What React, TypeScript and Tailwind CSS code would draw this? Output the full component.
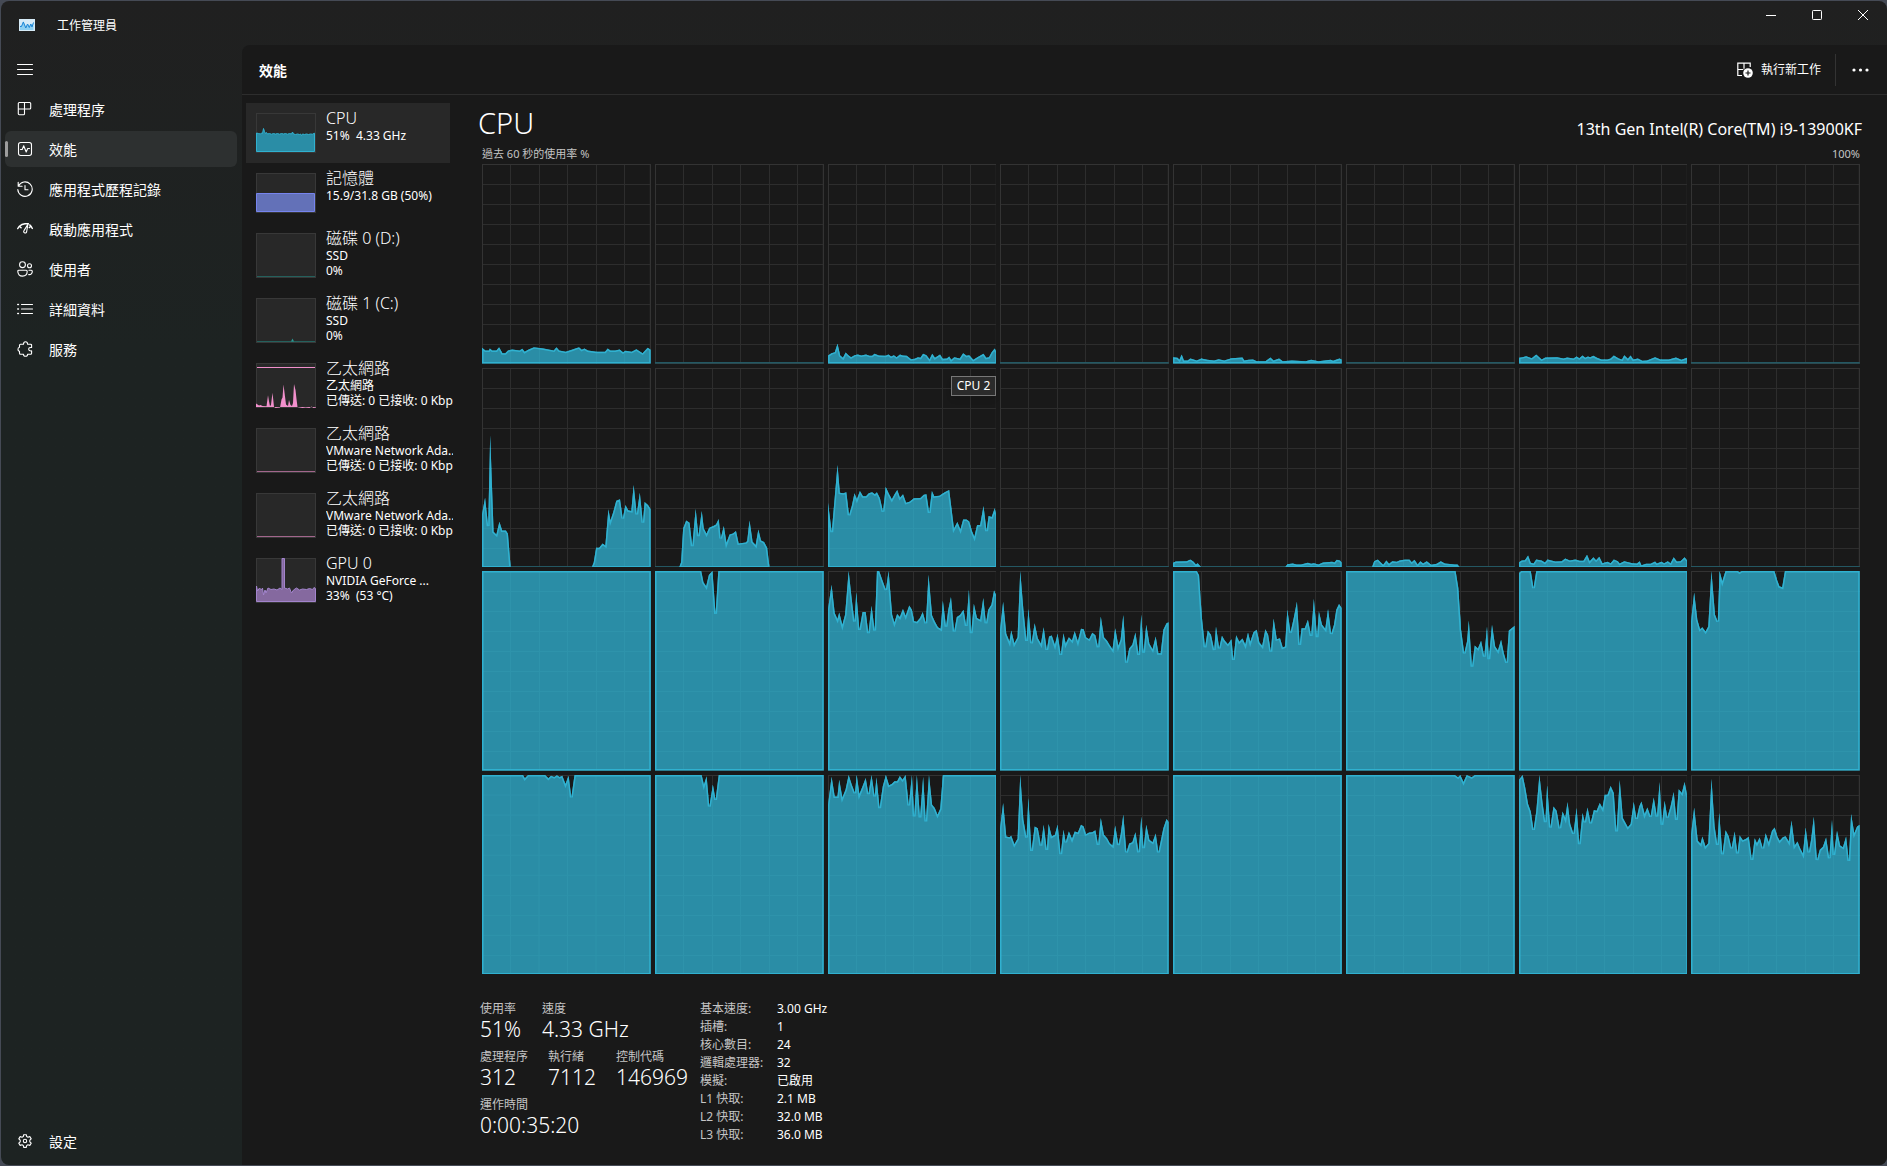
import type { ReactNode } from "react";

/* ---------- chart data: "x,y" pairs, `top` is the y value of 100 % ---------- */

type Series = { w: number; top: number; pts?: string; full?: boolean };

const CHART_H = 597;
const idle = (top: number): Series => ({ w: 372, top });
const busy = (top: number): Series => ({ w: 372, top, full: true });

const cores: Series[] = [
  {
    w: 494, top: -528,
    pts: "0,22 10,30 20,30 23,24 30,30 42,30 50,20 60,38 68,38 76,30 88,27 110,30 118,25 125,34 135,28 152,20 180,24 210,30 218,20 226,30 245,34 265,27 284,20 292,28 300,24 310,30 335,34 360,34 368,24 376,30 390,30 403,27 413,35 420,31 438,34 452,26 470,38 485,22 494,28",
  },
  idle(-528),
  {
    w: 497, top: -528,
    pts: "0,45 10,38 20,35 28,10 36,45 44,52 52,36 60,44 68,50 78,44 88,42 98,45 112,42 122,46 130,46 137,40 150,45 170,46 178,42 186,48 194,44 202,50 212,42 220,45 232,46 245,56 255,55 265,50 272,52 280,40 290,44 299,56 307,40 315,52 330,42 338,55 350,54 357,48 363,58 372,50 388,54 398,38 408,46 416,44 428,58 440,50 458,40 466,52 474,50 482,35 491,24 497,36",
  },
  idle(-528),
  {
    w: 369, top: -528,
    pts: "0,50 10,52 14,58 19,42 24,60 32,60 38,54 52,60 62,54 75,58 90,60 100,56 112,60 128,53 152,51 156,60 165,58 175,57 183,62 202,62 213,51 220,60 232,54 240,62 260,60 290,62 302,58 318,62 345,58 350,61 364,54 369,57",
  },
  idle(-528),
  {
    w: 372, top: -528,
    pts: "0,52 8,50 16,47 28,53 38,42 50,57 58,51 84,50 98,54 106,51 120,54 127,48 133,53 140,45 146,52 152,48 157,50 164,46 172,52 182,57 195,57 202,54 209,45 220,54 227,57 232,44 240,55 246,45 252,57 262,54 272,61 282,60 300,50 312,57 330,57 346,51 358,58 372,51",
  },
  idle(-528),

  {
    w: 494, top: 82,
    pts: "0,520 9,470 18,555 24,283 34,572 42,580 51,542 59,568 70,568 76,578 84,679 321,679 327,664 334,620 343,620 353,607 361,613 370,505 376,538 384,514 393,479 404,475 412,532 420,492 428,508 437,510 444,432 453,520 462,455 471,545 476,483 486,492 494,505",
  },
  {
    w: 498, top: 82,
    pts: "0,679 71,679 77,663 83,562 92,538 102,545 110,615 120,503 128,585 138,510 144,562 152,578 160,560 172,555 180,550 188,534 194,592 203,555 211,605 220,580 230,577 239,570 247,607 268,604 272,600 279,538 288,602 297,612 305,565 313,598 322,603 331,620 338,679 498,679",
  },
  {
    w: 497, top: 82,
    pts: "0,485 11,573 28,372 35,455 45,457 54,454 62,522 70,495 78,457 85,475 94,450 103,466 112,466 120,457 130,454 138,460 144,454 153,472 162,512 170,438 180,460 188,475 196,460 204,447 212,470 221,460 230,485 240,482 253,472 272,471 282,461 290,460 298,515 306,450 313,466 328,464 345,453 357,447 371,562 381,543 390,565 398,535 408,535 416,541 424,570 431,587 439,552 448,552 458,495 467,570 473,525 482,528 491,502 497,525",
  },
  idle(82),
  {
    w: 369, top: 82,
    pts: "0,665 6,661 30,660 38,655 45,662 50,670 54,666 62,679 245,679 250,669 262,667 270,670 280,670 295,665 302,668 308,666 318,670 328,664 348,662 353,664 358,656 365,658 369,664",
  },
  {
    w: 372, top: 82,
    pts: "0,679 57,679 62,660 70,655 82,671 89,658 95,668 102,660 112,662 118,658 130,655 140,655 145,663 151,656 158,670 164,660 170,667 178,660 188,671 200,668 209,660 218,667 240,670 246,670 251,679 372,679",
  },
  {
    w: 372, top: 82,
    pts: "0,663 6,658 13,657 20,643 26,665 32,667 38,655 50,658 57,664 63,655 80,661 94,660 102,652 112,658 124,655 134,659 142,659 150,641 156,660 164,648 170,657 177,647 184,666 195,662 202,666 209,655 218,660 222,667 232,660 250,666 260,667 266,660 270,672 280,668 290,668 300,661 304,667 314,662 320,666 328,660 334,666 341,648 348,661 356,660 365,648 372,660",
  },
  idle(82),

  busy(34),
  { w: 376, top: 34, pts: "0,34 103,34 108,68 114,80 120,46 128,34 135,162 141,34 376,34" },
  {
    w: 376, top: 34,
    pts: "0,148 8,75 15,160 21,178 25,158 32,195 38,165 46,34 53,120 59,185 63,98 70,210 77,157 84,157 90,220 97,138 104,212 109,34 114,34 122,65 129,90 135,34 143,165 148,188 154,163 160,172 167,148 173,168 181,137 187,150 192,184 198,186 205,175 211,157 218,190 224,45 232,167 238,185 245,202 251,207 256,124 263,200 268,150 274,112 281,215 287,172 294,166 302,150 308,198 314,90 319,220 325,132 332,175 339,180 346,115 352,190 357,150 364,135 370,92 376,110",
  },
  {
    w: 375, top: 34,
    pts: "0,210 7,126 14,222 21,245 25,212 32,250 39,232 45,34 52,150 59,243 63,148 70,250 77,190 84,235 91,252 97,202 104,270 109,230 115,227 122,255 128,222 135,285 141,220 146,252 153,232 160,242 166,214 173,244 180,207 186,208 191,232 198,238 205,219 212,226 218,262 224,170 231,232 238,243 244,256 250,268 256,205 263,258 268,240 274,166 281,308 287,266 294,255 301,218 308,285 314,164 319,278 325,195 332,252 339,268 346,230 352,280 357,280 363,210 370,190 375,187",
  },
  {
    w: 369, top: 34,
    pts: "0,34 52,34 57,47 63,170 70,262 76,212 83,225 90,270 94,200 101,265 107,228 113,242 120,253 128,238 132,300 138,226 145,246 152,236 158,254 164,218 169,246 176,217 183,210 189,248 195,258 202,208 208,225 214,275 220,176 227,238 234,235 240,263 245,260 250,150 257,218 264,175 271,126 277,255 281,205 288,205 295,180 302,228 308,117 315,232 319,155 326,195 333,207 339,148 346,222 352,195 357,150 363,133 369,145",
  },
  {
    w: 371, top: 34,
    pts: "0,34 241,34 247,85 253,210 260,280 266,245 270,182 277,320 283,257 290,266 297,243 304,290 310,200 314,298 321,195 328,260 334,272 341,240 347,280 353,308 358,212 371,198",
  },
  { w: 372, top: 34, pts: "0,40 5,34 26,34 32,85 38,34 372,34" },
  {
    w: 372, top: 34,
    pts: "0,185 7,98 14,180 20,208 25,202 32,215 38,200 45,34 53,165 59,185 63,34 69,65 76,34 103,34 107,38 112,34 184,34 190,62 195,80 201,83 207,34 372,34",
  },

  {
    w: 374, top: 31,
    pts: "0,31 91,31 95,41 102,31 140,31 147,41 153,33 160,37 166,32 172,37 178,33 185,58 192,33 198,98 205,31 374,31",
  },
  { w: 376, top: 31, pts: "0,31 104,31 109,60 115,35 121,125 129,60 135,105 142,31 376,31" },
  {
    w: 376, top: 31,
    pts: "0,120 8,36 15,95 21,95 25,45 32,98 39,75 46,31 53,60 60,85 64,31 70,88 77,65 84,40 90,88 97,31 104,95 108,38 115,130 122,65 129,31 136,62 142,58 148,50 154,50 160,34 166,45 173,31 180,122 187,31 192,155 198,31 205,158 212,36 218,170 225,31 232,120 238,130 244,150 250,132 256,31 376,31",
  },
  {
    w: 375, top: 31,
    pts: "0,190 7,115 14,215 21,217 25,213 32,238 39,222 45,31 52,165 59,218 63,100 70,258 77,185 84,190 91,242 97,180 104,255 108,178 115,215 122,210 128,180 135,268 141,195 146,232 153,200 160,222 166,200 173,203 180,180 186,185 191,208 198,203 205,202 212,196 218,240 224,160 231,210 238,220 244,235 250,242 256,182 263,240 268,210 274,150 281,262 287,236 294,232 301,202 308,262 314,155 319,250 325,180 332,225 339,232 346,206 352,262 357,230 363,190 370,163 375,172",
  },
  busy(31),
  { w: 372, top: 31, pts: "0,31 240,31 247,38 252,31 259,52 266,31 277,38 284,31 372,31" },
  {
    w: 372, top: 31,
    pts: "0,45 8,31 14,70 20,118 26,140 32,195 38,140 45,31 52,115 58,172 62,62 69,188 76,125 83,138 90,190 96,140 102,160 107,112 113,178 120,206 127,130 133,238 140,145 145,172 151,128 158,175 165,136 171,138 178,115 184,130 189,90 195,90 202,64 209,85 215,200 222,46 229,160 235,175 240,187 246,178 253,112 259,162 265,125 270,110 277,148 283,128 290,155 297,98 304,155 310,52 315,180 321,108 327,158 334,125 341,82 347,165 352,74 359,85 365,52 372,100",
  },
  {
    w: 371, top: 31,
    pts: "0,210 7,128 15,228 21,237 25,215 32,245 38,235 45,42 52,185 58,240 62,145 69,268 76,196 83,215 89,250 96,200 102,265 107,212 114,226 121,222 127,216 134,285 140,220 145,235 151,218 158,250 164,205 171,232 178,198 184,188 190,215 195,228 202,217 208,214 215,230 221,167 228,242 234,230 240,250 246,266 252,188 259,262 264,225 270,156 277,285 283,255 290,246 297,218 304,280 310,165 314,270 321,198 328,242 334,247 341,215 347,288 352,148 359,205 365,185 371,180",
  },
];

function CoreChart({ series, index }: { series: Series; index: number }) {
  const { w, top } = series;
  const bottom = top + CHART_H;
  const pts = series.full ? `0,${top} ${w},${top}` : series.pts;
  const area = pts && `0,${bottom} ${pts} ${w},${bottom}`;
  const cols = [1, 2, 3, 4, 5].map((i) => (i * w) / 5.92);
  const rows = [1, 2, 3, 4, 5, 6, 7, 8, 9].map((i) => top + i * 60);
  const lines = (
    <>
      {cols.map((x) => (
        <line key={`c${x}`} x1={x} x2={x} y1={top} y2={bottom} vectorEffect="non-scaling-stroke" />
      ))}
      {rows.map((y) => (
        <line key={`r${y}`} x1={0} x2={w} y1={y} y2={y} vectorEffect="non-scaling-stroke" />
      ))}
    </>
  );
  return (
    <svg
      role="img"
      aria-label={`CPU ${index}`}
      viewBox={`0 ${top} ${w} ${CHART_H}`}
      preserveAspectRatio="none"
      className="block h-full w-full"
    >
      <g stroke="#2d2d2d" strokeWidth="1" shapeRendering="crispEdges">
        {lines}
      </g>
      <rect x="0" y={top} width={w} height={CHART_H} fill="none" stroke="#333333" strokeWidth="2" vectorEffect="non-scaling-stroke" />
      <rect x="0" y={bottom - 4} width={w} height="4" fill="#24626f" />
      {area && (
        <>
          <clipPath id={`core-${index}`}>
            <polygon points={area} />
          </clipPath>
          <polygon points={area} fill="#2a8da6" />
          <g clipPath={`url(#core-${index})`}>
            <g stroke="#2e93ab" strokeWidth="1" shapeRendering="crispEdges">
              {lines}
            </g>
            <polygon points={area} fill="none" stroke="#30b1d0" strokeWidth="3" vectorEffect="non-scaling-stroke" />
          </g>
        </>
      )}
    </svg>
  );
}

/* ---------- thumbnails ---------- */

function Thumb({ h, children }: { h: number; children: ReactNode }) {
  return (
    <svg width="60" height={h} viewBox={`0 0 60 ${h}`} className="shrink-0" aria-hidden="true">
      <rect x="0.5" y="0.5" width="59" height={h - 1} fill="#282828" stroke="#383838" />
      {children}
    </svg>
  );
}

const cpuThumb = (
  <Thumb h={40}>
    <path
      d="M.5 38.500V20l2 .5 2 .5 1-1 1 .5 1-5 1 3 1 2 1-1 1 1.500 2-.5 2 .7 2-.7 2 .6 2-.6 2 .7 2-.7 2 .5 2-.5 2 .7 2-.7 2 .5 1-2 1 2 2 .5 2-.5 2 .5 1-.5 1 1.500 1-1.500 2 .5 2-.5 2 .5 2-.5 2 .2 2-1V38.500z"
      fill="#2a8da6" stroke="#30b1d0"
    />
  </Thumb>
);
const memThumb = (
  <Thumb h={40}>
    <path d="M.5 38.500V20.500H58.500V38.500z" fill="#6371b8" stroke="#7684ee" />
  </Thumb>
);
const disk0Thumb = (
  <Thumb h={45}>
    <path d="M1 43.500H59" stroke="#24605c" />
  </Thumb>
);
const disk1Thumb = (
  <Thumb h={45}>
    <path d="M1 43.500H59" stroke="#24605c" />
    <path d="M35 43.500l1.500-3 1.500 3z" fill="#2a9a94" />
  </Thumb>
);
const ethThumb = (
  <Thumb h={45}>
    <path d="M1 4.500H59" stroke="#f290cc" />
    <path
      d="M0 44V40.500l1.500 1 1.500 1 1.500-.5 2 1 4 .3 1.500-11 1 6 1 5 1-1.500 1.500-12 1.500 14 1.500 1.200 4.500-.5 1.500-8 1-2 1-13 1.500 12 1 8 2 1.500 1-6 1.500 5 1.500 1 1-3 1-19 1.500 6 1 9 1 8 5 1 3-.5 4 .5 2-1.500 2 1.500 4-1V44z"
      fill="#f290cc"
    />
  </Thumb>
);
const vmThumb = (
  <Thumb h={45}>
    <path d="M1 43.500H59" stroke="#a2668c" />
  </Thumb>
);
const gpuThumb = (
  <Thumb h={45}>
    <path
      d="M.5 43.500V28l1 5 2-3 2 2 1-2 1 7 1.500-5 1 3 2-5 3 1.500 3-.5 3 1 3-2 2 1.500V0.500h2.500V30l3 1 2-1 2 5 2-3 3-2 3 2 3-1 4 .5 3-1 3 1 1.500-2 1.500 1V43.500z"
      fill="#85699f" stroke="#a284cc"
    />
  </Thumb>
);

type Device = { title: string; lines: string[]; thumb: ReactNode; tall?: boolean; active?: boolean };
const devices: Device[] = [
  { title: "CPU", lines: ["51%  4.33 GHz"], thumb: cpuThumb, active: true },
  { title: "記憶體", lines: ["15.9/31.8 GB (50%)"], thumb: memThumb },
  { title: "磁碟 0 (D:)", lines: ["SSD", "0%"], thumb: disk0Thumb, tall: true },
  { title: "磁碟 1 (C:)", lines: ["SSD", "0%"], thumb: disk1Thumb, tall: true },
  { title: "乙太網路", lines: ["乙太網路", "已傳送: 0 已接收: 0 Kbps"], thumb: ethThumb, tall: true },
  { title: "乙太網路", lines: ["VMware Network Ada...", "已傳送: 0 已接收: 0 Kbps"], thumb: vmThumb, tall: true },
  { title: "乙太網路", lines: ["VMware Network Ada...", "已傳送: 0 已接收: 0 Kbps"], thumb: vmThumb, tall: true },
  { title: "GPU 0", lines: ["NVIDIA GeForce ...", "33%  (53 °C)"], thumb: gpuThumb, tall: true },
];

function DeviceItem({ d }: { d: Device }) {
  return (
    <button
      type="button"
      className={`flex w-[204px] items-start gap-[10px] pl-[10px] text-left ${d.tall ? "h-[65px]" : "h-[60px]"} ${d.active ? "bg-[#282828]" : ""}`}
    >
      <span className="mt-[10px] shrink-0">{d.thumb}</span>
      <span className="mt-[5px] block w-[127px] shrink-0 overflow-hidden whitespace-pre">
        <span className="block h-5 text-[16px] font-light leading-5">{d.title}</span>
        {d.lines.map((l) => (
          <span key={l} className="block text-[12px] leading-[15px]">
            {l}
          </span>
        ))}
      </span>
    </button>
  );
}

/* ---------- icons ---------- */

function Icon({ children, size = 16 }: { children: ReactNode; size?: number }) {
  return (
    <svg width={size} height={size} viewBox="0 0 16 16" fill="none" stroke="currentColor" strokeWidth="1.1" strokeLinecap="round" strokeLinejoin="round" className="shrink-0" aria-hidden="true">
      {children}
    </svg>
  );
}

const icons = {
  menu: <path d="M.5 3.500h15M.5 8.500h15M.5 13.500h15" strokeWidth="1" />,
  processes: <path d="M2.300 1.500h10.400a1 1 0 0 1 1 1v4.500a1 1 0 0 1-1 1H7.500v4.700a1 1 0 0 1-1 1H2.300a1 1 0 0 1-1-1V2.500a1 1 0 0 1 1-1zM1.300 8h6.200M7.500 1.500V8" />,
  performance: (
    <>
      <rect x="1.500" y="1.500" width="13" height="13" rx="2.200" />
      <path d="M3.500 8.500h1.700l1.500-3.700 2.500 6.200 1.500-3.500h1.800" />
    </>
  ),
  history: <path d="M1.200 1.300v3.900h3.900M1.500 5A7.200 7.200 0 1 1 .8 8.500M8 4.500v4.200h3" />,
  startup: (
    <>
      <path d="M.7 7.600L2.400 5.200l1.700 1.600M2.400 5.200A9 9 0 0 1 8 2.800h3.400M12.700 3.900a9 9 0 0 1 2.600 3.500M12.300 6.600l1.500-1.300" strokeWidth="1.400" />
      <path d="M10.900 3.300L7 9.600a1.500 1.500 0 1 0 2.600 1.400z" />
    </>
  ),
  users: (
    <>
      <circle cx="5.500" cy="3.700" r="2.900" />
      <circle cx="12.500" cy="4.700" r="2" />
      <path d="M1.800 9.200h7.400a1 1 0 0 1 1 1c0 3-1.700 4.900-4.700 4.900S.8 13.200.8 10.200a1 1 0 0 1 1-1zM12 9.200h2.300a1 1 0 0 1 1 1c0 2.300-1.300 3.600-3.600 3.400" />
    </>
  ),
  details: (
    <>
      <path d="M4.500 3.500h11M4.500 8h11M4.500 12.500h11" />
      <path d="M.8 3.500h.6M.8 8h.6M.8 12.500h.6" strokeWidth="1.600" />
    </>
  ),
  services: (
    <path d="M3.500 3.200h3C6.500 1.700 7.200.8 8.500.8s2.100.9 2.100 2.400h3a1 1 0 0 1 1 1v2.300c-1.900-.2-2.900.5-2.900 1.700s1 1.900 2.900 1.700v2.300a1 1 0 0 1-1 1h-3c0 1.300-.8 2.100-2.100 2.100s-2-.8-2-2.100h-3a1 1 0 0 1-1-1v-2C1.500 10.200 1 9.300 1 8.200s.5-2 1.500-2v-2a1 1 0 0 1 1-1z" />
  ),
  settings: (
    <>
      <path d="M6.700 1.200h2.600l.4 1.900 1.300.7 1.800-.7 1.400 2.300-1.400 1.300v1.600l1.400 1.300-1.400 2.300-1.800-.6-1.300.7-.4 1.900H6.700L6.300 12l-1.300-.7-1.800.6-1.400-2.300 1.400-1.300V6.700L1.800 5.400l1.400-2.300 1.800.7 1.300-.7z" transform="translate(0 .5)" />
      <circle cx="8" cy="8" r="1.700" />
    </>
  ),
};

const nav: { label: string; icon: ReactNode; active?: boolean }[] = [
  { label: "處理程序", icon: icons.processes },
  { label: "效能", icon: icons.performance, active: true },
  { label: "應用程式歷程記錄", icon: icons.history },
  { label: "啟動應用程式", icon: icons.startup },
  { label: "使用者", icon: icons.users },
  { label: "詳細資料", icon: icons.details },
  { label: "服務", icon: icons.services },
];

function NavItem({ label, icon, active }: { label: string; icon: ReactNode; active?: boolean }) {
  return (
    <a
      href="#"
      aria-current={active ? "page" : undefined}
      className={`relative flex h-9 items-center gap-4 rounded-md pl-3 text-[14px] ${active ? "bg-[#2d3030]" : ""}`}
    >
      {active && <span className="absolute left-0 top-[10px] h-4 w-[3px] rounded-full bg-[#9d9d9d]" />}
      <Icon>{icon}</Icon>
      {label}
    </a>
  );
}

function Stat({ label, value }: { label: string; value: string }) {
  return (
    <div className="h-12">
      <dt className="text-[12px] leading-[18px] text-[#c4c4c4]">{label}</dt>
      <dd className="text-[21px] font-light leading-[22px]">{value}</dd>
    </div>
  );
}

const specs = [
  ["基本速度:", "3.00 GHz"],
  ["插槽:", "1"],
  ["核心數目:", "24"],
  ["邏輯處理器:", "32"],
  ["模擬:", "已啟用"],
  ["L1 快取:", "2.1 MB"],
  ["L2 快取:", "32.0 MB"],
  ["L3 快取:", "36.0 MB"],
];

export default function App() {
  return (
    <div className="h-screen bg-[#454a55] pb-px pl-px pt-px font-['Noto_Sans','Noto_Sans_CJK_TC',sans-serif] text-white">
      <div className="flex h-full flex-col overflow-hidden rounded-lg bg-linear-to-b from-[#202020] to-[#1d2322] to-30%">
        <header className="flex h-11 shrink-0 items-start justify-between">
          <div className="flex h-12 items-center gap-[22px] pl-[18px] text-[12px]">
            <svg width="16" height="12" viewBox="0 0 16 12" aria-hidden="true">
              <rect width="16" height="12" fill="#d6ebf7" />
              <path d="M1 11V7l2-1 1.500-4L7 8l2-3 1.500 2L12 4.500 13 7l1.500-4v8z" fill="#8dd0f2" />
              <path d="M1 7.500h1.500L4.300 3l2.500 6L8.500 5l1.800 3.500 1.500-3.500 1.200 3 1.500-4.500" fill="none" stroke="#1c86d6" strokeWidth="1" />
            </svg>
            <h1 className="pt-px">工作管理員</h1>
          </div>
          <div className="flex h-7 pr-px">
            <button type="button" aria-label="最小化" className="flex w-[46px] items-center justify-center">
              <svg width="10" height="10" viewBox="0 0 10 10" stroke="white"><path d="M0 5.500h10" /></svg>
            </button>
            <button type="button" aria-label="最大化" className="flex w-[46px] items-center justify-center">
              <svg width="10" height="10" viewBox="0 0 10 10" stroke="white" fill="none"><rect x=".5" y=".5" width="9" height="9" rx=".8" /></svg>
            </button>
            <button type="button" aria-label="關閉" className="flex w-[46px] items-center justify-center">
              <svg width="10" height="10" viewBox="0 0 10 10" stroke="white"><path d="M0 0l10 10M10 0L0 10" /></svg>
            </button>
          </div>
        </header>

        <div className="flex min-h-0 flex-1">
          <nav className="flex w-[241px] shrink-0 flex-col gap-1 pb-[6px] pl-1 pr-[5px] pt-[6px]">
            <button type="button" aria-label="選單" className="flex h-9 items-center pl-3">
              <Icon>{icons.menu}</Icon>
            </button>
            {nav.map((n) => (
              <NavItem key={n.label} {...n} />
            ))}
            <div className="mt-auto">
              <NavItem label="設定" icon={icons.settings} />
            </div>
          </nav>

          <main className="flex min-w-0 flex-1 flex-col rounded-tl-lg bg-[#191919]">
            <div className="flex h-[50px] shrink-0 items-center border-b border-[#2d2d2d] pl-[17px] pr-[18px] pt-px">
              <h2 className="text-[14px] font-bold">效能</h2>
              <button type="button" className="ml-auto flex items-center gap-2 text-[12px]">
                <svg width="16" height="16" viewBox="0 0 16 16" fill="none" stroke="white" aria-hidden="true">
                  <path d="M5 13.500H.8V1.200h12.400V5M.8 7.500h5.500M7 1.200v5.500" strokeWidth="1.200" />
                  <circle cx="11" cy="11" r="4.800" fill="white" stroke="none" />
                  <path d="M11 8.500v5M8.500 11h5" stroke="#191919" strokeWidth="1.200" />
                </svg>
                執行新工作
              </button>
              <span className="ml-[14px] h-8 w-px bg-[#333333]" />
              <button type="button" aria-label="更多" className="ml-4">
                <svg width="17" height="16" viewBox="0 0 17 16" fill="white"><circle cx="2" cy="8" r="1.600" /><circle cx="8.500" cy="8" r="1.600" /><circle cx="15" cy="8" r="1.600" /></svg>
              </button>
            </div>

            <div className="flex min-h-0 flex-1">
              <div className="w-[208px] shrink-0 pl-1 pt-2">
                {devices.map((d, i) => (
                  <DeviceItem key={i} d={d} />
                ))}
              </div>

              <section className="flex min-w-0 flex-1 flex-col pb-[21px] pl-8 pr-[27px] pt-2">
                <div className="-ml-1 -mr-[2px] flex h-10 items-center justify-between">
                  <h3 className="text-[29px] font-light leading-10">CPU</h3>
                  <p className="pt-3 text-[16px]">13th Gen Intel(R) Core(TM) i9-13900KF</p>
                </div>
                <div className="flex h-[21px] items-center justify-between pt-px text-[11px] text-[#c4c4c4]">
                  <span>過去 60 秒的使用率 %</span>
                  <span>100%</span>
                </div>
                <div className="grid min-h-0 flex-1 grid-cols-8 grid-rows-4 gap-1">
                  {cores.map((s, i) => (
                    <div key={i} className="relative min-h-0 min-w-0">
                      <CoreChart series={s} index={i} />
                      {i === 10 && (
                        <div role="tooltip" className="absolute right-0 top-2 border border-[#777777] bg-[#2b2b2b] px-[5px] text-[12px] leading-[18px] shadow-md">
                          CPU 2
                        </div>
                      )}
                    </div>
                  ))}
                </div>

                <div className="-ml-[2px] mt-[26px] flex h-36 shrink-0">
                  <dl className="flex w-[220px] flex-col">
                    <div className="flex">
                      <div className="w-[62px]"><Stat label="使用率" value="51%" /></div>
                      <Stat label="速度" value="4.33 GHz" />
                    </div>
                    <div className="flex">
                      <div className="w-[68px]"><Stat label="處理程序" value="312" /></div>
                      <div className="w-[68px]"><Stat label="執行緒" value="7112" /></div>
                      <Stat label="控制代碼" value="146969" />
                    </div>
                    <Stat label="運作時間" value="0:00:35:20" />
                  </dl>
                  <table className="self-start text-left text-[12px] leading-[18px]">
                    <tbody>
                      {specs.map(([k, v]) => (
                        <tr key={k}>
                          <th scope="row" className="w-[77px] p-0 font-normal text-[#c4c4c4]">{k}</th>
                          <td className="p-0">{v}</td>
                        </tr>
                      ))}
                    </tbody>
                  </table>
                </div>
              </section>
            </div>
          </main>
        </div>
      </div>
    </div>
  );
}
